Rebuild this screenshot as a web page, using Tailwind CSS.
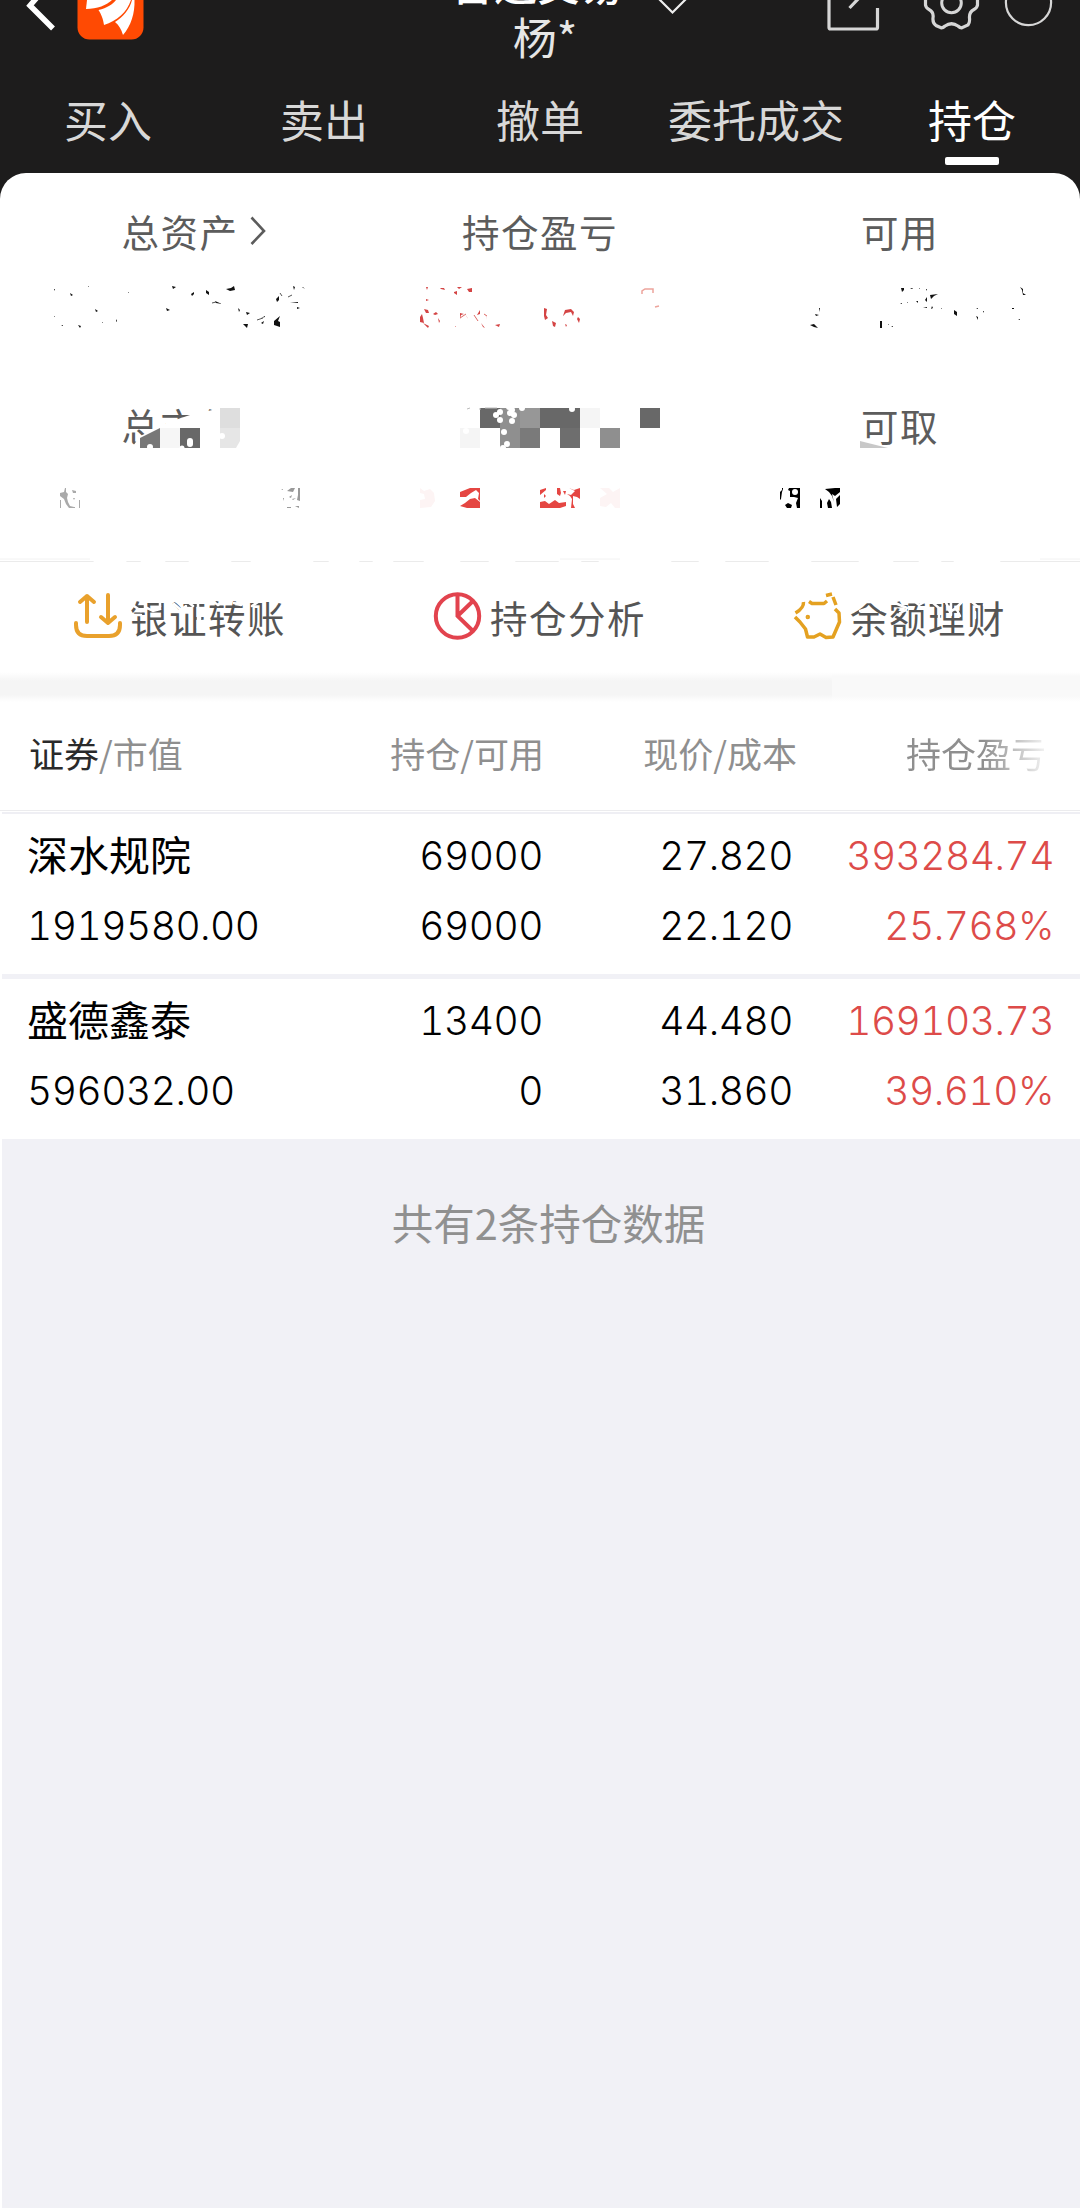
<!DOCTYPE html>
<html lang="zh-CN">
<head>
<meta charset="utf-8">
<title>持仓</title>
<script src="https://cdn.jsdelivr.net/npm/@tailwindcss/browser@4"></script>
</head>
<body class="bg-white">
<div class="relative w-[1080px] h-[2208px] overflow-hidden bg-[#1d1c1c] font-['Noto_Sans_CJK_SC',sans-serif] flex flex-col">

  <!-- Title bar, scrolled partly out of view -->
  <header class="relative h-[72px] shrink-0">
    <svg class="absolute left-0 top-0" width="1080" height="72" fill="none">
      <path d="M40 -6L30 5.500L53 28.500" stroke="#fff" stroke-width="5.500"/>
      <rect x="77.500" y="-26" width="66" height="65.500" rx="12" fill="#ff4a03"/>
      <g fill="#fff">
        <path d="M87 0L86 9C97 9 107 5 112 0Z"/>
        <path d="M98.500 10C107 8 113 4 116 0L131 0C127 12 117 21 104 25C103 18 101 14 98.500 10Z"/>
        <path d="M115 22C123 17 130 9 132 0L134.500 0C135 13 131 26 123 35C121 29 119 25 115 22Z"/>
      </g>
      <g stroke="#d6d6d6" stroke-width="2.200">
        <path d="M658 -2L672.500 12.500L687 -2" stroke="#eee"/>
        <path d="M829 -4V27.500Q829 29 830.500 29H876Q877.500 29 877.500 27.500V8M849.500 8L860 -3" stroke-width="3.200"/>
        <path d="M925.500 -4V5Q926 8 929 9.500Q934 12 933 18Q932.500 23 936 25.500L941 27.800Q943 28 945 26Q951.500 21.500 958 26Q960 28 962 27.800L968 25Q970 23 969.500 18Q969 12 974 9.500Q977 8 977.500 5V-4" stroke-width="3.200"/>
        <circle cx="951.500" cy="3" r="9.800" stroke-width="3"/>
        <circle cx="1028.500" cy="2.500" r="22.600"/>
      </g>
    </svg>
    <div class="absolute left-[451px] -top-[48px] w-[176px] text-[43px] leading-[60px] font-medium text-white whitespace-nowrap">普通交易</div>
    <div class="absolute left-[5px] top-[6px] w-[1080px] text-center text-[44px] leading-[60px] text-[#e6e6e6]">杨*</div>
  </header>

  <nav class="grid grid-cols-5 h-[101px] shrink-0 text-center text-[44px] leading-[94px] text-[#d8d8d8]">
    <div>买入</div>
    <div>卖出</div>
    <div>撤单</div>
    <div>委托成交</div>
    <div class="relative text-white">持仓<span class="absolute left-[81px] top-[85px] w-[54px] h-[8px] rounded-[2px] bg-white"></span></div>
  </nav>

  <main class="grow flex flex-col bg-white rounded-t-[26px]">
    <!-- Account summary -->
    <section class="h-[389px] shrink-0 border-b border-[#ebebeb] grid grid-cols-3 grid-rows-[194px_1fr] pt-[30px] text-center text-[37.5px] leading-[56px] tracking-[1.500px] text-[#5c5c5c]">
      <div class="relative">总资产<svg class="absolute left-[249px] top-[12px]" width="20" height="32" fill="none"><path d="M2.500 2.500L15 16L2.500 29" stroke="#5c5c5c" stroke-width="2.600"/></svg></div>
      <div>持仓盈亏</div>
      <div>可用</div>
      <div>总市值</div>
      <div></div>
      <div>可取</div>
    </section>

    <!-- Shortcuts -->
    <section class="grid grid-cols-3 h-[110px] shrink-0 text-[37.5px] leading-[56px] tracking-[1.500px] text-[#555] pt-[27px]">
      <div class="flex pl-[72px] gap-[6px]">
        <svg width="52" height="52" fill="none" stroke="#e9a12c" stroke-width="4" stroke-linecap="round" stroke-linejoin="round"><path d="M15 33V7M8 13L15 7L22 13M36 6V34M29 28L36 34L43 28M4 34V36Q4 47 15 47H37Q48 47 48 36V34"/></svg>
        <span>银证转账</span>
      </div>
      <div class="flex pl-[72px] gap-[6px]">
        <svg width="52" height="52" fill="none" stroke="#e2434e" stroke-width="4"><circle cx="25.500" cy="27" r="21.700"/><path d="M25.500 5V27L41 42M25.500 27L41 12"/></svg>
        <span>持仓分析</span>
      </div>
      <div class="flex pl-[72px] gap-[6px]">
        <svg width="52" height="52" fill="none" stroke="#e4a121" stroke-width="3.500" stroke-linejoin="round"><path d="M11.500 13Q12 19 3.500 24M3 28L8 33L13.500 40L15.500 48H22L28 45L34 48.500L41 48L47.500 33L47 24L43 20M17 12.500L20 14.500H32L35 12M34 6.500L40 5M41 8L44 16"/><circle cx="15.800" cy="28" r="1" stroke-width="2.500"/></svg>
        <span>余额理财</span>
      </div>
    </section>

    <div class="flex h-[30px] shrink-0">
      <div class="w-[832px] bg-[linear-gradient(#fff,#f5f5f5_30%,#f5f5f5_75%,#fff)]"></div>
      <div class="grow bg-[linear-gradient(#fff,#f9f9f9_15%,#f9f9f9_80%,#fff)]"></div>
    </div>

    <!-- Column headings -->
    <section class="h-[109px] shrink-0 border-b border-[#ececee] text-[35px] leading-[101px] text-[#8f8f8f] grid grid-cols-[293px_251px_253px_1fr]">
      <div class="pl-[29px]"><span class="text-[#2a2a2a]">证券</span>/市值</div>
      <div class="text-right">持仓/可用</div>
      <div class="text-right">现价/成本</div>
      <div class="ml-[109px]"><span class="bg-linear-to-r from-[#8f8f8f] from-55% to-white to-105% bg-clip-text text-transparent">持仓盈亏</span></div>
    </section>
    <div class="h-[3px] shrink-0 pt-px pl-[2px]"><div class="h-[2px] bg-[#efeff4]"></div></div>

    <!-- Holdings -->
    <section class="ml-[2px] h-[160px] shrink-0 pt-[7px] pl-[25px] text-[39px] leading-[70px] tracking-[-0.500px] text-black grid grid-cols-[266px_250px_250px_261px] grid-rows-[70px_70px] font-['Inter','Noto_Sans_CJK_SC',sans-serif] font-light tabular-nums">
      <div class="font-['Noto_Sans_CJK_SC',sans-serif] font-normal text-[41px] leading-[64px] tracking-normal">深水规院</div><div class="text-right">69000</div><div class="text-right">27.820</div><div class="text-right text-[#dd4b49]">393284.74</div>
      <div>1919580.00</div><div class="text-right">69000</div><div class="text-right">22.120</div><div class="text-right text-[#dd4b49]">25.768%</div>
    </section>
    <div class="ml-[2px] h-[5px] shrink-0 bg-[#f1f1f6]"></div>
    <section class="ml-[2px] h-[160px] shrink-0 pt-[7px] pl-[25px] text-[39px] leading-[70px] tracking-[-0.500px] text-black grid grid-cols-[266px_250px_250px_261px] grid-rows-[70px_70px] font-['Inter','Noto_Sans_CJK_SC',sans-serif] font-light tabular-nums">
      <div class="font-['Noto_Sans_CJK_SC',sans-serif] font-normal text-[41px] leading-[64px] tracking-normal">盛德鑫泰</div><div class="text-right">13400</div><div class="text-right">44.480</div><div class="text-right text-[#dd4b49]">169103.73</div>
      <div>596032.00</div><div class="text-right">0</div><div class="text-right">31.860</div><div class="text-right text-[#dd4b49]">39.610%</div>
    </section>

    <section class="ml-[2px] grow bg-[#f1f1f6] pt-[53px] pl-[15px] text-center text-[41.5px] leading-[60px] text-[#909090]">共有2条持仓数据</section>
  </main>

  <!-- Redaction marks over the private amounts -->
  <svg class="absolute left-0 top-0 pointer-events-none" width="1080" height="720">
    <path d="M129 452L140 436L160 427L166 423L190 415L244 403V452Z" fill="#fff"/>
    <path d="M140 438L160 428V448H140Z" fill="#777"/>
    <path d="M160 428h20v20h-20z" fill="#f6f6f6"/>
    <path d="M180 428h20v20h-20z" fill="#686868"/>
    <path d="M220 408h20v20h-20z" fill="#dedede"/>
    <path d="M220 428h20v13l-4 7h-16z" fill="#e6e6e6"/>
    <path d="M480 408h20v20h-20zM540 408h40v20h-40zM640 408h20v20h-20z" fill="#686868"/>
    <path d="M500 408h20v40h-20zM600 428h20v20h-20z" fill="#8f8f8f"/>
    <path d="M520 408h20v20h-20z" fill="#979797"/>
    <path d="M520 428h20v20h-20z" fill="#7a7a7a"/>
    <path d="M560 428h20v20h-20z" fill="#6e6e6e"/>
    <path d="M460 428h20v20h-20zM580 408h20v20h-20z" fill="#f5f5f5"/>
    <path d="M860 441L888 448H860Z" fill="#c8c8c8"/>
    <path d="M467 409l3 -1M479 409l2 0M485 408h12" stroke="#bbb"/>
    <g fill="#fff">
      <circle cx="150" cy="447" r="3"/><rect x="187" y="438" width="6" height="9" rx="3"/><circle cx="182" cy="448" r="2.500"/><circle cx="222" cy="436" r="3"/>
      <circle cx="496" cy="415" r="3"/><circle cx="500" cy="412" r="3"/><circle cx="500" cy="420" r="3"/><circle cx="510" cy="413" r="3"/><circle cx="514" cy="415" r="3"/><circle cx="512" cy="421" r="3"/><circle cx="512" cy="410" r="3"/><circle cx="522" cy="408" r="3"/><circle cx="572" cy="409" r="3"/><circle cx="504" cy="432" r="3"/><circle cx="507" cy="444" r="3"/><circle cx="503" cy="448" r="3"/><circle cx="466" cy="431" r="3"/><circle cx="509" cy="407" r="3"/>
    </g>
    <!-- first amount row -->
    <path fill="#111" d="M172 286l4 1-3 2zM191 294l3-2v2l-2 2zM206 290l3 2v3l-3-2zM226 289l5-1 3-2 1 4-5 1zM243 324l5 0-1 4zM261 323l3-2-1 3zM246 312l4 1-3 2zM276 299l3-3v4l-2 2zM274 321l6-5-2 5 2 1v5l-6-2zM293 286l2 1-1 3zM290 302h8v1zM297 307l3 1-3 1zM166 308l4 2-3 1zM95 309l3 2-2 1zM70 293l3 2-2 1zM78 325l3 1-1 2zM65 286l1 3zM238 308l2 2-1 2zM270 301l-1-2zM215 301l7 3-6-1zM265 317l-4 1 4-2zM61 325h2v1zM116 319l1 2-1 1zM88 286h1v1zM128 292h1v1zM54 289h1v2zM54 316h1v1zM163 313l3 3zM174 324l3 3zM180 316h-1zM180 286l2 3zM302 287l3 2-2-2zM255 324l2 0zM232 297l2 2zM205 306l2 0zM102 322h1v1z"/>
    <g fill="none" stroke="#555" stroke-width="1">
      <path d="M280 293l2 3M257 320l6-2M212 303l4-1M288 297l4-2"/>
    </g>
    <path fill="#111" d="M901 288h3v2l-2 2zM910 288h3l-1 1zM930 295l8-1-4 2-3 3zM927 297v5l-2-2zM923 307h4v1zM932 306l1 2-2 1zM954 310l3 2v4l-3-2zM976 316l2 1v3zM880 321h2v7h-2zM810 325l4-1 4 4-4-1zM815 314l4 1-3 1zM803 317l2 2zM819 308h1v4zM806 312l2 1zM894 313h1zM1020 287l3 2v4l3 2-3 0-1-5zM916 301h2v2zM907 302h1v1zM900 303h2v1zM1014 322l1 3zM983 311h1v2zM976 308h2v1zM888 324h1v1zM891 326h2v1zM899 324v2zM1012 308h2v1h-2zM1018 319h2v1zM941 308h1v1zM919 288h1v1zM926 289h1v2z"/>
    <path fill="#d44444" d="M440 288l4 0 1 2-4-1zM454 292l3-1v4l-3-2zM457 287l5 0-3 2zM467 289l5-1v4l-3 0zM426 299l3 1-3 1zM424 309l4 1 1 3-3 0zM422 314l-2 3v5l4 1-1-5zM423 323l6 3-1 2zM433 314l3-2 2 2-3 1zM438 318l2 3-1 2zM460 313l4 1-3 1-1 4zM465 314l3 5-1-2zM480 310l-3 5 3-1zM485 313l2 7-1-4zM481 323l4 5-2-1zM469 321l2 5zM499 308l1 3zM495 325l5-1-1 3zM544 308l3 1-1 6 2 3-3 2-1-4zM552 321l4 2-1 4-2-1zM563 316l2-6 6-1 3 3-1 4-2-4-5 1zM578 317l2 2-1 4-2-4zM565 324l2 1-1 2zM426 287l2 0-1 3zM455 326h1v1zM487 324l1 1zM476 324l1 4z"/>
    <g fill="none" stroke="#eda49c" stroke-width="1.500"><path d="M642 294v-3l3-2h8v4M655 307l4-1"/><path d="M460 318l6-4M474 315l4 6M484 314l3 2" stroke="#dd6a66" stroke-width="1"/></g>
    <!-- second amount row -->
    <path fill="#aaa" d="M60 493l4 -1 1-4h1l0 4 2 2-1 4 1 4 2 4 4 1v1h-5l-3-4-2-5-4-3zM72 490l4 1v2h-3zM73 498l2 0-1 2zM79 500h1v8h-1zM72 508v-1h3v1zM60 500h1v8h-1z"/>
    <path fill="#999" d="M287 491l4-3h4l-2 4zM298 488h2v13l-3-1 1-5zM289 497l3-2-1 3zM292 499l4-1-3 2zM287 508v-1h4v1zM295 506h4v2zM281 489h2v1zM283 498h1v3zM281 505h1z"/>
    <path fill="#fdf4f4" d="M420 488l4 3 6-2 4 4 1 8-4 6-11 1v-8l5-1-1-5-4-1zM600 488h9l4 4 7-4v20h-5l-4-5-5 4-6-1v-8l7-4z"/>
    <path fill="#e54642" d="M460 492l10-4h10v13l-2-2 1-6-3-3-5 3-5 4h-6zM460 506l5-3 5-4 5-1 5 4v6h-13zM540 490l6-2 0 2-6 5zM557 488h3l1 5-1 3-3-2zM569 488l5 2 6-2v11l-3-2-4-1 0 8 2 4h-4l1-9-2-3-3-2 4 1 4-4zM540 502l5-1 4 3 6-4 4 3 7-1v4l-6 2h-20zM563 491h3l-1 4zM544 494l2 2-2 2z"/>
    <path fill="#000" d="M780 492l2-2v-2h1v1l-1 3-1 7-1 1zM789 488h11v20h-3l-1-5 2-5-4-1-4 0 0-6-2-1zM785 505l3-2 4 2-1 3h-4zM820 498l2 3v7h-2zM825 489l10-1 5 0v4l-5 4-3-2 2 8-2-6-3-4zM836 499l4-4v9l-3 3zM827 503l2-4 2 3 1 6h-4z"/>
    <circle cx="795" cy="492" r="3" fill="#fff"/>
    <!-- worn spots over the shortcut row -->
    <g fill="none" stroke="#fff" stroke-width="3" stroke-linecap="round">
      <path d="M95 561.500h30M142 562h22M190 562h40M252 562h60M330 562h28M374 562h18M425 562h34M490 562h24M560 562h20M600 562h70M700 562h24M770 562h40M860 562h32M920 562h20M955 562h44"/>
      <path stroke-width="2.500" d="M134 606l7 5 6-3 6 3 7-2M145 600v10M133 615h8M160 601v6M174 604l7 6 5-4M198 604v24M188 602l5 4M211 600l7 5 6-4M200 615v4M234 603l7 2M252 606l6-4M270 599l5 4"/>
      <path stroke-width="2.500" d="M855 608l7-4M861 602h14M860 611l6-2M878 606l3 4M895 603l12 5M900 613l6-3M913 600l6 5 5-3M932 602l7 6v10M945 600l5 12 6-4 4 8M951 601v14M962 602l-6 6M972 602l6 5M984 605h6M975 612v6"/>
    </g>
    <path d="M0 559h90M560 559h60M1040 559h40" stroke="#f2f2f2"/>
    <path d="M0 805.500h1080" stroke="#f5f5f5"/>
  </svg>
</div>
</body>
</html>
